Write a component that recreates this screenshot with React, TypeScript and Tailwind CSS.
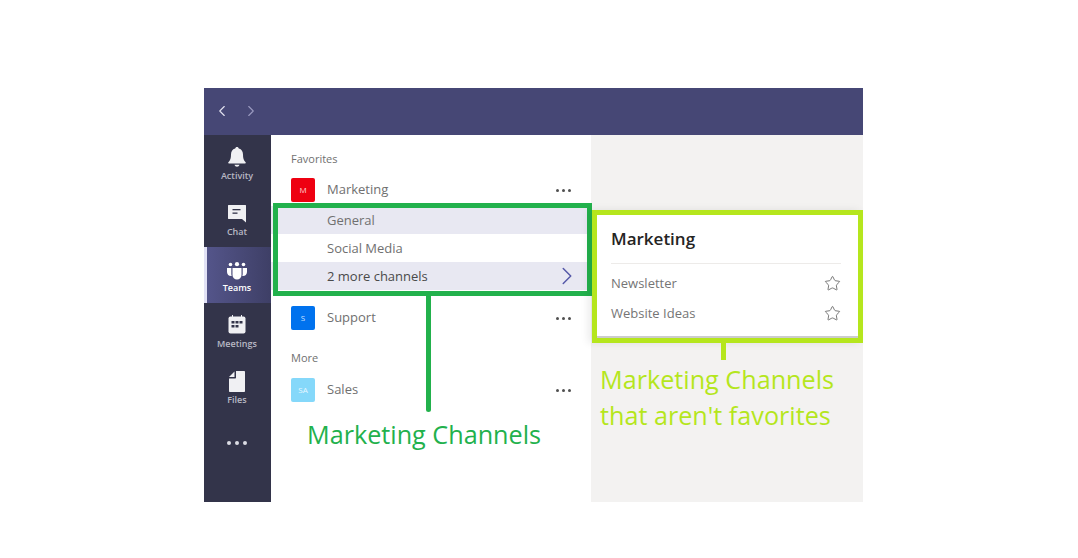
import React from "react";
import { ChevronLeft, ChevronRight, Star } from "lucide-react";

const font = "font-['Open_Sans','Noto_Sans',sans-serif]";

const BellIcon = () => (
  <svg width="20" height="22" viewBox="0 0 20 22" fill="#f0f0f3">
    <path d="M10 1c-1 0-1.600.6-1.800 1.500C5.300 3.300 4 5.600 4 8.500c0 3.500-.6 5.700-2.600 7.800-.5.500-.2 1.200.5 1.200h16.200c.7 0 1-.7.500-1.200C16.600 14.200 16 12 16 8.500c0-2.900-1.300-5.200-4.200-6C11.600 1.600 11 1 10 1z" />
    <path d="M7.500 18.700h5c-.3 1.300-1.300 2-2.500 2s-2.200-.7-2.500-2z" />
  </svg>
);

const ChatIcon = () => (
  <svg width="20" height="20" viewBox="0 0 20 20">
    <path d="M1.500 1h17c.3 0 .5.200.5.500v17L15 15H1.500c-.3 0-.5-.2-.5-.5v-13c0-.3.200-.5.500-.5z" fill="#f0f0f3" />
    <rect x="5.500" y="5" width="8" height="1.300" fill="#33344a" />
    <rect x="5.500" y="8.500" width="5" height="1.300" fill="#33344a" />
  </svg>
);

const TeamsIcon = () => (
  <svg width="22" height="18" viewBox="0 0 22 18" fill="#ffffff">
    <circle cx="4.500" cy="2.500" r="1.800" />
    <circle cx="11" cy="2.200" r="2.100" />
    <circle cx="17.500" cy="2.500" r="1.800" />
    <path d="M1 6h4.300v6c0 .8.100 1.400.4 2C3 14.300 1 12.500 1 10z" />
    <path d="M21 6h-4.300v6c0 .8-.1 1.400-.4 2 2.700.3 4.700-1.500 4.700-4z" />
    <path d="M6.500 6h9v7c0 2.700-2 4.500-4.500 4.500S6.500 15.700 6.500 13z" />
  </svg>
);

const MeetingsIcon = () => (
  <svg width="18" height="21" viewBox="0 0 18 21">
    <rect x="0.500" y="1.500" width="17" height="17" rx="2" fill="#f0f0f3" />
    <rect x="4" y="0" width="1" height="2" fill="#f0f0f3" />
    <rect x="13" y="0" width="1" height="2" fill="#f0f0f3" />
    <g fill="#33344a">
      <rect x="3.500" y="6" width="3" height="2.500" />
      <rect x="7.500" y="6" width="3" height="2.500" />
      <rect x="11.500" y="6" width="3" height="2.500" />
      <rect x="3.500" y="10" width="3" height="2.500" />
      <rect x="7.500" y="10" width="3" height="2.500" />
    </g>
  </svg>
);

const FilesIcon = () => (
  <svg width="16" height="21" viewBox="0 0 16 21" fill="#f0f0f3">
    <path d="M7 0h8c.6 0 1 .4 1 1v19c0 .6-.4 1-1 1H1c-.6 0-1-.4-1-1V7.500h6c.6 0 1-.4 1-1z" />
    <path d="M5.500 0.500v5.500H0z" />
  </svg>
);

const Dots = () => (
  <div className="flex gap-[3px]">
    <span className="w-[3px] h-[3px] rounded-full bg-[#505050]" />
    <span className="w-[3px] h-[3px] rounded-full bg-[#505050]" />
    <span className="w-[3px] h-[3px] rounded-full bg-[#505050]" />
  </div>
);

const RailItem = ({ label, icon, active }: { label: string; icon: React.ReactNode; active?: boolean }) => (
  <div
    className={
      active
        ? "h-14 flex flex-col items-center justify-end pb-[8px] pr-px text-[9px] font-semibold text-white bg-linear-to-r from-[#55568c] to-[#3e3f66] shadow-[inset_3px_0_0_#e2e2f6]"
        : "h-14 flex flex-col items-center justify-end pb-[8px] pr-px text-[9px] font-semibold text-[#b8b8c4]"
    }
  >
    <div className="h-[24px] flex items-end justify-center">{icon}</div>
    <span className="leading-[14px] mt-[1px]">{label}</span>
  </div>
);

const TeamRow = ({ initials, name, color, textColor }: { initials: string; name: string; color: string; textColor: string }) => (
  <div className="h-7 flex items-center pl-5 pr-5 text-[13px] text-[#707070]">
    <div className={`w-6 h-6 rounded-[2px] flex items-center justify-center text-[8px] mr-3 ${color} ${textColor}`}>
      {initials}
    </div>
    <span className="flex-1">{name}</span>
    <Dots />
  </div>
);

const ChannelRow = ({ name, color, dark, chevron }: { name: string; color: string; dark?: boolean; chevron?: boolean }) => (
  <div className={`h-7 flex items-center pl-14 pr-[9px] pt-[2px] text-[13px] ${color} ${dark ? "text-[#4a4a4a]" : "text-[#707070]"}`}>
    <span className="flex-1">{name}</span>
    {chevron && <ChevronRight size={30} strokeWidth={1.200} className="text-[#5558a8] -mt-[2px]" />}
  </div>
);

const StarRow = ({ name }: { name: string }) => (
  <div className="h-[30px] flex items-center justify-between text-[13px] text-[#757575]">
    <span>{name}</span>
    <Star size={17} strokeWidth={1.100} className="text-[#555555] -mt-[2px]" />
  </div>
);

export default function App() {
  return (
    <div className={`relative w-[1078px] h-[558px] bg-white overflow-hidden pt-[88px] pl-[204px] ${font}`}>
      <div className="w-[659px] h-[414px] flex flex-col">
        <div className="h-[47px] bg-[#464775] flex items-center pl-[9px] pb-px gap-[11px] text-[#e2e2f0]">
          <ChevronLeft size={18} strokeWidth={1.500} />
          <ChevronRight size={18} strokeWidth={1.500} className="text-[#9a9ac0]" />
        </div>
        <div className="flex-1 flex">
          <div className="w-[67px] bg-[#33344a] flex flex-col">
            <RailItem label="Activity" icon={<BellIcon />} />
            <RailItem label="Chat" icon={<ChatIcon />} />
            <RailItem label="Teams" icon={<TeamsIcon />} active />
            <RailItem label="Meetings" icon={<MeetingsIcon />} />
            <RailItem label="Files" icon={<FilesIcon />} />
            <div className="h-[56px] pr-px flex items-center justify-center gap-[4px]">
              <span className="w-[4px] h-[4px] rounded-full bg-[#dcdce4]" />
              <span className="w-[4px] h-[4px] rounded-full bg-[#dcdce4]" />
              <span className="w-[4px] h-[4px] rounded-full bg-[#dcdce4]" />
            </div>
          </div>
          <div className="w-[320px] bg-white pt-[14px]">
            <div className="pl-5 text-[11px] leading-[20px] text-[#707070]">Favorites</div>
            <div className="mt-[7px]">
              <TeamRow initials="M" name="Marketing" color="bg-[#ee0011]" textColor="text-[#ffd0d0]" />
            </div>
            <div className="mt-[2px]">
              <ChannelRow name="General" color="bg-[#e8e8f2]" />
              <ChannelRow name="Social Media" color="bg-white" />
              <ChannelRow name="2 more channels" color="bg-[#e8e8f2]" dark chevron />
            </div>
            <div className="mt-[14px]">
              <TeamRow initials="S" name="Support" color="bg-[#0072ee]" textColor="text-[#cfe2ff]" />
            </div>
            <div className="mt-[16px] pl-5 text-[11px] leading-[20px] text-[#707070]">More</div>
            <div className="mt-[8px]">
              <TeamRow initials="SA" name="Sales" color="bg-[#85d8fa]" textColor="text-[#e8f7ff]" />
            </div>
          </div>
          <div className="flex-1 bg-[#f3f2f1]" />
        </div>
      </div>

      {/* callouts drawn over the app */}
      <div className="absolute left-[273px] top-[203px] w-[319px] h-[93px] border-[5px] border-[#22b14c]" />
      <div className="absolute left-[426px] top-[296px] w-[5px] h-[116px] rounded-b-sm bg-[#22b14c]" />
      <div className="absolute left-[307px] top-[415px] text-[25.200px] leading-[38px] text-[#22b14c] whitespace-nowrap">
        Marketing Channels
      </div>

      <div className="absolute left-[592px] top-[210px] w-[271px] h-[133px] border-[5px] border-[#b5e61d] bg-white pl-[14px] pr-[17px] shadow-[inset_0_-2px_0_#cccccc,-4px_0_8px_rgba(0,0,0,0.08)]">
        <div className="h-[49px] flex items-center text-[17px] font-semibold text-[#252423] border-b border-[#edebe9]">
          Marketing
        </div>
        <div className="pt-[5px]">
          <StarRow name="Newsletter" />
          <StarRow name="Website Ideas" />
        </div>
      </div>
      <div className="absolute left-[721px] top-[343px] w-[5px] h-[17px] bg-[#b5e61d]" />
      <div className="absolute left-[600px] top-[361px] text-[25.200px] leading-[36px] text-[#b5e61d] whitespace-nowrap">
        <div>Marketing Channels</div>
        <div>that aren't favorites</div>
      </div>
    </div>
  );
}
